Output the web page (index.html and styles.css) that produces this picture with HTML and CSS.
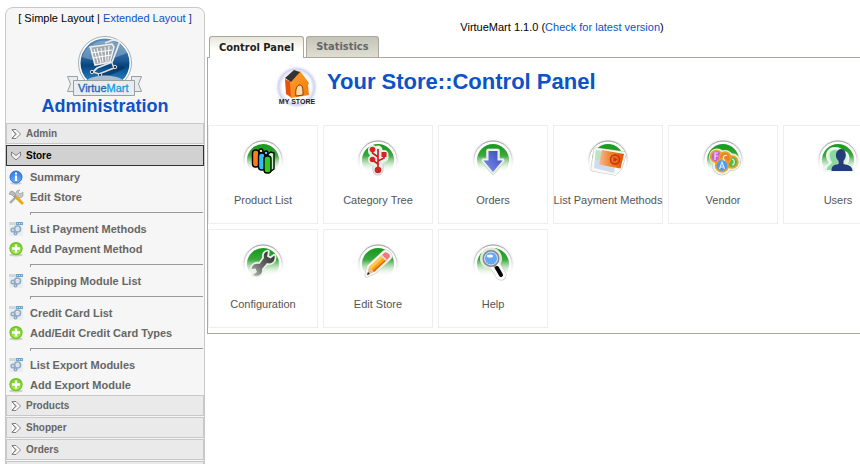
FILE: index.html
```html
<!DOCTYPE html>
<html lang="en">
<head>
<meta charset="utf-8">
<title>VirtueMart Administration</title>
<link rel="stylesheet" href="styles.css">
</head>
<body>
<svg class="defs" aria-hidden="true">
  <defs>
    <linearGradient id="green" x1="0" y1="0" x2="0" y2="1"><stop offset="0.1" stop-color="#1c9c20"/><stop offset="0.35" stop-color="#3aa83d"/><stop offset="0.95" stop-color="#fff"/></linearGradient>
    <linearGradient id="fade" x1="0" y1="0" x2="0" y2="1"><stop offset="0" stop-color="#999"/><stop offset="0.35" stop-color="#ccc"/><stop offset="0.75" stop-color="#fff"/></linearGradient>
    <radialGradient id="halo"><stop offset="0.8" stop-color="#c4c4c4"/><stop offset="1" stop-color="#fff" stop-opacity="0"/></radialGradient>
    <linearGradient id="veil" x1="0" y1="0" x2="0" y2="1"><stop offset="0.42" stop-color="#fff" stop-opacity="0"/><stop offset="0.74" stop-color="#fff"/></linearGradient>
    <linearGradient id="arrow" x1="1" y1="0" x2="0" y2="1"><stop offset="0" stop-color="#3348b8"/><stop offset="1" stop-color="#8493ef"/></linearGradient>
    <linearGradient id="note" x1="0" y1="0" x2="1" y2="0"><stop offset="0" stop-color="#f9b896"/><stop offset="0.5" stop-color="#ee7f22"/><stop offset="1" stop-color="#dc5208"/></linearGradient>
    <linearGradient id="steel" gradientUnits="userSpaceOnUse" x1="33" y1="14" x2="15" y2="34"><stop offset="0" stop-color="#333"/><stop offset="0.6" stop-color="#6c6c6c"/><stop offset="1" stop-color="#aaa"/></linearGradient>
    <linearGradient id="globe" x1="0" y1="0" x2="0" y2="1"><stop offset="0" stop-color="#5c8fb8"/><stop offset="0.45" stop-color="#1d5a94"/><stop offset="0.55" stop-color="#07457f"/><stop offset="1" stop-color="#2f9be0"/></linearGradient>
    <linearGradient id="plus" x1="0" y1="0" x2="0" y2="1"><stop offset="0" stop-color="#6fcf1f"/><stop offset="1" stop-color="#a5ef45"/></linearGradient>
    <linearGradient id="info" x1="0" y1="0" x2="0" y2="1"><stop offset="0" stop-color="#2a74e0"/><stop offset="1" stop-color="#6db1fb"/></linearGradient>
    <linearGradient id="wall" x1="0" y1="0" x2="1" y2="1"><stop offset="0" stop-color="#ffa02c"/><stop offset="1" stop-color="#f07a0c"/></linearGradient>
    <radialGradient id="storehalo"><stop offset="0.65" stop-color="#fff"/><stop offset="0.82" stop-color="#d0d3f0"/><stop offset="1" stop-color="#fff" stop-opacity="0"/></radialGradient>
    <symbol id="disc" viewBox="0 0 48 48">
      <circle cx="24" cy="24" r="22" fill="url(#halo)"/>
      <circle cx="24" cy="24" r="19" fill="#fff" stroke="url(#fade)"/>
      <circle cx="24" cy="24" r="16" fill="url(#green)"/>
      <rect width="48" height="48" fill="url(#veil)"/>
    </symbol>
    <symbol id="right" viewBox="0 0 10 10"><path d="M1 .5h4L9.500 5 5 9.500H1L4.500 5zM1 1l4.500 4L1 9" fill="#fff" stroke="#777" stroke-width=".9"/></symbol>
    <symbol id="down" viewBox="0 0 10 10"><path d="M.5 1l4.500 3.500L9.500 1v4L5 9 .5 5z" fill="#eee" stroke="#777" stroke-width=".9"/></symbol>
    <symbol id="add" viewBox="0 0 16 16"><ellipse cx="8" cy="14" rx="7" ry="1.500" fill="#ccc"/><circle cx="8" cy="7.500" r="6" fill="url(#plus)" stroke="#6cc024" stroke-width="1.200"/><path d="M8 3.500v8M4 7.500h8" stroke="#fff" stroke-width="2.400"/></symbol>
    <symbol id="module" viewBox="0 0 16 16"><path d="M1 1h14v14H1z" fill="#e9eef1"/><path d="M1 1h8v3H1z" fill="#d2d8dc"/><path d="M8 1h7v3H8z" fill="#6ba6cf"/><path d="M9 2.500h5" stroke="#bfe0f3" stroke-dasharray="1 1"/><g fill="none" stroke="#93a9c2" stroke-width="1.600"><circle cx="9.500" cy="8" r="3"/><circle cx="5" cy="9" r="1.800"/><circle cx="7.500" cy="12.500" r="1.300"/></g><circle cx="9.500" cy="8" r="1.500" fill="#cfe0f2"/></symbol>
  </defs>
</svg>
<div class="page">
  <aside class="sidebar">
    <div class="layouts">[ Simple Layout | <a href="#">Extended Layout</a> <span class="ink">]</span></div>
    <svg class="logo" viewBox="0 0 78 62" role="img" aria-label="VirtueMart">
      <circle cx="39" cy="27" r="26.500" fill="#fff" stroke="#a4acb2"/>
      <circle cx="39" cy="27" r="24.500" fill="url(#globe)"/>
      <path d="M16 21C21 2 53-2 61 17 50 22 32 28 16 21z" fill="#b9cfe0" opacity=".4"/>
      <path d="M33 39l22-9 5 2-20 9z" fill="#052c55" opacity=".6"/>
      <path d="M25 13l-1-2 22-3 2 3-4 15-15 3z" fill="#a3a9ad" stroke="#f2f2f2" stroke-width="1.500"/>
      <path d="M28 13l4 14M31 12l4 15M35 12l2 14M39 11l1 15M43 10l-1 15M25 17l21-3M27 22l18-3" stroke="#fff"/>
      <path d="M39 7l8-3 7 1-3 8-5 13-15 6-5 5" fill="none" stroke="#e8e8e8" stroke-width="1.800"/>
      <path d="M27 36l6 2 15-6-2-5" fill="none" stroke="#ddd" stroke-width="1.500"/>
      <g fill="#333" stroke="#ddd"><circle cx="26" cy="36" r="1.700"/><circle cx="49" cy="31" r="1.700"/><circle cx="34" cy="39" r="1.700"/></g>
      <path d="M1.500 40.500h10v15h-10l3-7.500zM75.500 40.500h-10v15h10l-3-7.500z" fill="#e9ebec" stroke="#9a9fa2"/>
      <path d="M21 44c8-6 28-6 36 0z" fill="#a9bdd0"/>
      <path d="M7.500 44.500h61v15h-61z" fill="#e9edf0" stroke="#9a9fa2"/>
      <text x="12" y="56" class="logo-text" fill="#1762b5" stroke="#1762b5" stroke-width=".3">Virtue<tspan fill="#159bd8" stroke="#159bd8">Mart</tspan></text>
    </svg>
    <h2 class="side-title">Administration</h2>
    <nav class="menu">
      <button class="bar"><svg class="chev"><use href="#right"/></svg>Admin</button>
      <button class="bar open"><svg class="chev"><use href="#down"/></svg>Store</button>
      <ul class="links">
        <li><svg class="ico" viewBox="0 0 16 16"><ellipse cx="8" cy="14.500" rx="6" ry="1.200" fill="#ccc"/><circle cx="8" cy="8" r="6" fill="url(#info)" stroke="#2c6fd0"/><path d="M8 3.500v2M8 6.500v5.500" stroke="#fff" stroke-width="2.200"/></svg><a href="#">Summary</a></li>
        <li><svg class="ico" viewBox="0 0 16 16"><path d="M2 14L11 5" stroke="#aaa" stroke-width="2.400"/><path d="M15 3l-3 2-2-2 2-2a4 4 0 1 0 3 6z" fill="#c6c6c6" stroke="#999" stroke-width=".6"/><path d="M1 5l2-3 3 1 2 4-2 1-2-2z" fill="#bbb" stroke="#888" stroke-width=".6"/><path d="M6 7l3 3" stroke="#999" stroke-width="1.500"/><path d="M9 9l5 5" stroke="#e8a90c" stroke-width="3" stroke-linecap="round"/></svg><a href="#">Edit Store</a></li>
        <li class="rule"></li>
        <li><svg class="ico"><use href="#module"/></svg><a href="#">List Payment Methods</a></li>
        <li><svg class="ico"><use href="#add"/></svg><a href="#">Add Payment Method</a></li>
        <li class="rule"></li>
        <li><svg class="ico"><use href="#module"/></svg><a href="#">Shipping Module List</a></li>
        <li class="rule"></li>
        <li><svg class="ico"><use href="#module"/></svg><a href="#">Credit Card List</a></li>
        <li><svg class="ico"><use href="#add"/></svg><a href="#">Add/Edit Credit Card Types</a></li>
        <li class="rule"></li>
        <li><svg class="ico"><use href="#module"/></svg><a href="#">List Export Modules</a></li>
        <li><svg class="ico"><use href="#add"/></svg><a href="#">Add Export Module</a></li>
      </ul>
      <button class="bar"><svg class="chev"><use href="#right"/></svg>Products</button>
      <button class="bar"><svg class="chev"><use href="#right"/></svg>Shopper</button>
      <button class="bar"><svg class="chev"><use href="#right"/></svg>Orders</button>
      <div class="bar"></div>
    </nav>
  </aside>
  <main class="main">
    <p class="version">VirtueMart 1.1.0 (<a href="#">Check for latest version</a>)</p>
    <div class="tabs">
      <button class="tab active">Control Panel</button>
      <button class="tab">Statistics</button>
    </div>
    <section class="panel">
      <header class="head">
        <svg class="store" viewBox="0 0 48 44" role="img" aria-label="My Store">
          <circle cx="24.500" cy="23" r="22" fill="url(#storehalo)"/>
          <path d="M13 15l6 3 1 16-6-4z" fill="#e8500d"/>
          <path d="M18 18L28 7l9 12-1 2 1 10-18 3z" fill="url(#wall)"/>
          <path d="M13 14l9-8 6 2-9 10z" fill="#333"/>
          <path d="M24 32c-1-7 1-11 4-11s3 5 3 10z" fill="#ffd9a6" stroke="#8a3c08"/>
          <text x="25" y="40" text-anchor="middle" class="store-text" fill="#222">MY STORE</text>
        </svg>
        <h1>Your Store::Control Panel</h1>
      </header>
      <div class="cards">
        <a class="card" href="#"><svg viewBox="0 0 48 48"><use href="#disc"/><path d="M29 18l3-2 3 1v16l-4 3z" fill="#c9f5c4" stroke="#000" stroke-width="1.400"/><g stroke="#000" stroke-width="1.400"><circle cx="22" cy="15" r="2" fill="#ffd7a0"/><rect x="13.500" y="14" width="6.500" height="17" rx="3" fill="#ff7d16"/><path d="M20 16l2 2v14l-2-1z" fill="#d85a00"/><circle cx="27" cy="17" r="2" fill="#6cb8ff"/><rect x="19.500" y="17" width="6.500" height="17" rx="3" fill="#31bdf5"/><rect x="25" y="20" width="7" height="17" rx="3" fill="#35c918"/></g></svg><span>Product List</span></a>
        <a class="card" href="#"><svg viewBox="0 0 48 48"><use href="#disc"/><g stroke="#ccc" fill="none" stroke-width="11" stroke-linecap="round" stroke-linejoin="round"><path d="M24 24v10"/></g><g stroke="#e9f0e6" fill="none" stroke-width="9" stroke-linecap="round" stroke-linejoin="round"><path d="M18.500 13.500v2l5.500 5M24 14v20M18.500 23.500l5.500 4M30 18.500v3l-6 4"/></g><path d="M24 13v20M18.500 14v3l5.500 4M18.500 24l5.500 4M30 18v4l-6 3" stroke="#c91f25" stroke-width="1.700" fill="none"/><g fill="#cf2429"><circle cx="18.500" cy="13.500" r="2.800"/><circle cx="18.500" cy="23.500" r="2.800"/><circle cx="24" cy="34" r="3.300"/><path d="M27.500 16h5v5h-5z"/></g></svg><span>Category Tree</span></a>
        <a class="card" href="#"><svg viewBox="0 0 48 48"><use href="#disc"/><path d="M19.500 15h9v9.500h5L24 36l-9.500-11.500h5z" fill="none" stroke="#bbb" stroke-width="5" stroke-linejoin="round"/><path d="M19.500 15h9v9.500h5L24 36l-9.500-11.500h5z" fill="url(#arrow)" stroke="#e6f2e4" stroke-width="4" stroke-linejoin="round" paint-order="stroke"/></svg><span>Orders</span></a>
        <a class="card" href="#"><svg viewBox="0 0 48 48"><use href="#disc"/><path d="M12 14l28 4-4 14-5 5-22-4z" fill="#fff" stroke="#c4c4c4" stroke-width="5" stroke-linejoin="round"/><path d="M12 14l28 4-4 14-5 5-22-4z" fill="#fff" stroke="#f7f9f4" stroke-width="4" stroke-linejoin="round"/><path d="M12 14l21 4-3 19-20-5z" fill="#cfdcf0"/><path d="M12 14l12 2-3 9-10-1z" fill="#bde3c2"/><path d="M18 14l22 4-3.500 14.500L15 28.500z" fill="url(#note)"/><circle cx="31" cy="23.500" r="4.500" fill="none" stroke="#c92e10" stroke-width="1.500"/><path d="M29.500 21l4 2.500-4 2.500z" fill="#c92e10"/></svg><span>List Payment Methods</span></a>
        <a class="card" href="#"><svg viewBox="0 0 48 48"><use href="#disc"/><g fill="#f6f8f2" stroke="#bbb" stroke-width=".7"><circle cx="23" cy="29.500" r="9.500"/><circle cx="33" cy="26" r="8.500"/></g><g fill="#e9f3e6"><circle cx="18" cy="20.500" r="8"/><circle cx="26" cy="22" r="8"/><circle cx="33" cy="26" r="8"/><circle cx="23" cy="29.500" r="9"/></g><g stroke="#eda11f" stroke-width="1.800"><circle cx="17.500" cy="20.500" r="5.800" fill="#c45ee0"/><circle cx="33" cy="26" r="5.800" fill="#55b94c"/><circle cx="26" cy="22" r="5.800" fill="#e9822f"/><circle cx="23" cy="29.500" r="6.300" fill="#4e9cf0"/></g><g fill="none" stroke="#fff" stroke-opacity=".8" stroke-width="1.200"><path d="M16 24v-7h3M16 20h3M20.500 33l2.500-7 2.500 7M21.500 31h3M28 19.500c-4-1-5 4-2 5M33 23c3 0 3 6 0 6"/></g></svg><span>Vendor</span></a>
        <a class="card" href="#"><svg viewBox="0 0 48 48"><use href="#disc"/><path d="M10 35c0-6 6-5 6-8-6-8-2-15 5-15 4 0 7 2 8 4 6 0 7 8 3 12 1 3 8 1 8 7z" fill="#d9f0dc" stroke="#eef8ee" stroke-width="2"/><path d="M13 34c0-5 5-5 5-8-5-8-1-12 3-12s5 3 4 8l-3 12z" fill="#8cd9a0"/><path d="M17.500 35c0-5 2-6 7-7v-3c-5-5-2-12 2.500-12s7 7 2.500 12v3c5 1 9 2 9 7z" fill="#233c7a"/></svg><span>Users</span></a>
        <a class="card" href="#"><svg viewBox="0 0 48 48"><use href="#disc"/><path d="M29 11.500l-1 5 3.500 2 4-3c1 6-3 9-7.500 7.500L23 29c1 5-4 8.500-9 6l4-3-1.500-3.500-4 .5c1-5 5-6 8-5l4.500-6c-1-4 1-6.500 4-6.500z" fill="url(#steel)" stroke="#eaf2e8" stroke-width="3.500" paint-order="stroke" stroke-linejoin="round"/></svg><span>Configuration</span></a>
        <a class="card" href="#"><svg viewBox="0 0 48 48"><use href="#disc"/><path d="M13 35l2-8 15-14q2-2 5 1 2 2 0 4L20 32z" fill="#fff" stroke="#c4c4c4" stroke-width="5" stroke-linejoin="round"/><path d="M13 35l2-8 15-14q2-2 5 1 2 2 0 4L20 32z" fill="#fff" stroke="#f7f9f4" stroke-width="4" stroke-linejoin="round"/><path d="M15 27l13-12 5 5-13 12z" fill="#fba61f"/><path d="M15 27l13-12 2 2-13 12z" fill="#ffc954"/><path d="M18 31l14-12 1 1-13 12z" fill="#e26e08"/><path d="M28 15l2-2q2-2 5 1 2 2 0 4l-2 2z" fill="#f2787d"/><path d="M27.500 15.500l5 5" stroke="#ddd" stroke-width="1.500"/><path d="M13 35l2-8 5 5z" fill="#e7bd8c"/><path d="M13 35l1-3 2 2z" fill="#222"/></svg><span>Edit Store</span></a>
        <a class="card" href="#"><svg viewBox="0 0 48 48"><use href="#disc"/><path d="M27 27l5 8" stroke="#c4c4c4" stroke-width="11" stroke-linecap="round"/><circle cx="22" cy="18.500" r="11" fill="#dfe9df"/><path d="M27 27l5 8" stroke="#fafafa" stroke-width="10" stroke-linecap="round"/><path d="M25 25l3 4" stroke="#999" stroke-width="3"/><path d="M28 28l4 7" stroke="#000" stroke-width="4" stroke-linecap="round"/><circle cx="22" cy="18.500" r="7.500" fill="#65a8f5" stroke="#888" stroke-width="2"/><circle cx="22" cy="18.500" r="6.500" fill="none" stroke="#d8e9ff"/><ellipse cx="21" cy="16" rx="3" ry="1.500" fill="#fff"/></svg><span>Help</span></a>
      </div>
    </section>
  </main>
</div>
</body>
</html>
```
FILE: styles.css
```css
* { box-sizing: border-box; }

body {
  margin: 0;
  height: 100vh;
  overflow: hidden;
  background: #fff;
  color: #000;
  font: 11px/14px "Liberation Sans", Arial, sans-serif;
}

a { color: #0a53c8; text-decoration: none; }
h1, h2, p, ul { margin: 0; padding: 0; }
button { font: inherit; cursor: pointer; }
.defs { position: absolute; width: 0; height: 0; }

.page {
  display: flex;
  align-items: flex-start;
  gap: 2px;
  padding: 7px 0 0 5px;
}

/* Sidebar */
.sidebar {
  flex: 0 0 200px;
  border: 1px solid #c8c8c8;
  border-radius: 8px 8px 0 0;
  background: #f6f6f6;
}
.layouts { padding-top: 3px; text-align: center; }
.ink { color: #0a3a9a; }
.logo { display: block; width: 78px; height: 62px; margin: 11px auto 0; }
.logo-text { font: 11px "Liberation Sans", Arial, sans-serif; }
.side-title {
  color: #0a53c8;
  font-size: 18px;
  line-height: 16px;
  text-align: center;
  padding-bottom: 9px;
}
.menu { display: flex; flex-direction: column; }
.bar {
  display: flex;
  align-items: center;
  gap: 5px;
  height: 21px;
  margin-bottom: 1px;
  padding: 0 4px;
  border: 1px solid #c8c8c8;
  background: #eaeaea;
  color: #666;
  font-size: 10px;
  font-weight: bold;
  text-align: left;
}
.bar.open { border-color: #333; background: #d1d1d1; color: #000; }
.chev { width: 10px; height: 10px; }
.links { list-style: none; }
.links li { display: flex; align-items: center; gap: 6px; height: 20px; padding-left: 2px; }
.links a { color: #666; font-weight: bold; }
.ico { width: 16px; height: 16px; }
.links .rule { height: 12px; padding: 0 1px 0 24px; }
.rule::before { content: ""; flex: 1; height: 2px; border-top: 1px solid #999; border-left: 1px solid #999; }

/* Main area */
.main { flex: 1 0 710px; }
.version { padding: 13px 0 2px; text-align: center; }
.tabs { display: flex; gap: 2px; padding-left: 2px; position: relative; z-index: 1; }
.tab {
  height: 21px;
  padding: 0 9px;
  border: 1px solid #aca899;
  border-bottom: 0;
  border-radius: 3px 3px 0 0;
  background: linear-gradient(#c4c4b8, #dedfd2);
  color: #666;
  font: bold 11px/14px "DejaVu Sans Condensed", Tahoma, sans-serif;
}
.tab.active { height: 22px; margin-bottom: -1px; background: linear-gradient(#e6e6dc, #fffffa 60%, #fff); color: #222; }
.panel { border: 1px solid #aca899; padding-bottom: 5px; }
.head { display: flex; align-items: flex-start; gap: 7px; padding: 6px 0 17px 64px; }
.store { width: 48px; height: 44px; }
.store-text { font: bold 7px "Liberation Sans", Arial, sans-serif; }
.head h1 { color: #0a53c8; font-size: 22px; line-height: 36px; }

.cards { display: flex; flex-wrap: wrap; gap: 5px; }
.card {
  display: flex;
  flex-direction: column;
  align-items: center;
  gap: 9px;
  width: 110px;
  height: 99px;
  padding-top: 10px;
  border: 1px solid #eee;
  color: #555;
  white-space: nowrap;
}
.card svg { width: 48px; height: 48px; }
```
